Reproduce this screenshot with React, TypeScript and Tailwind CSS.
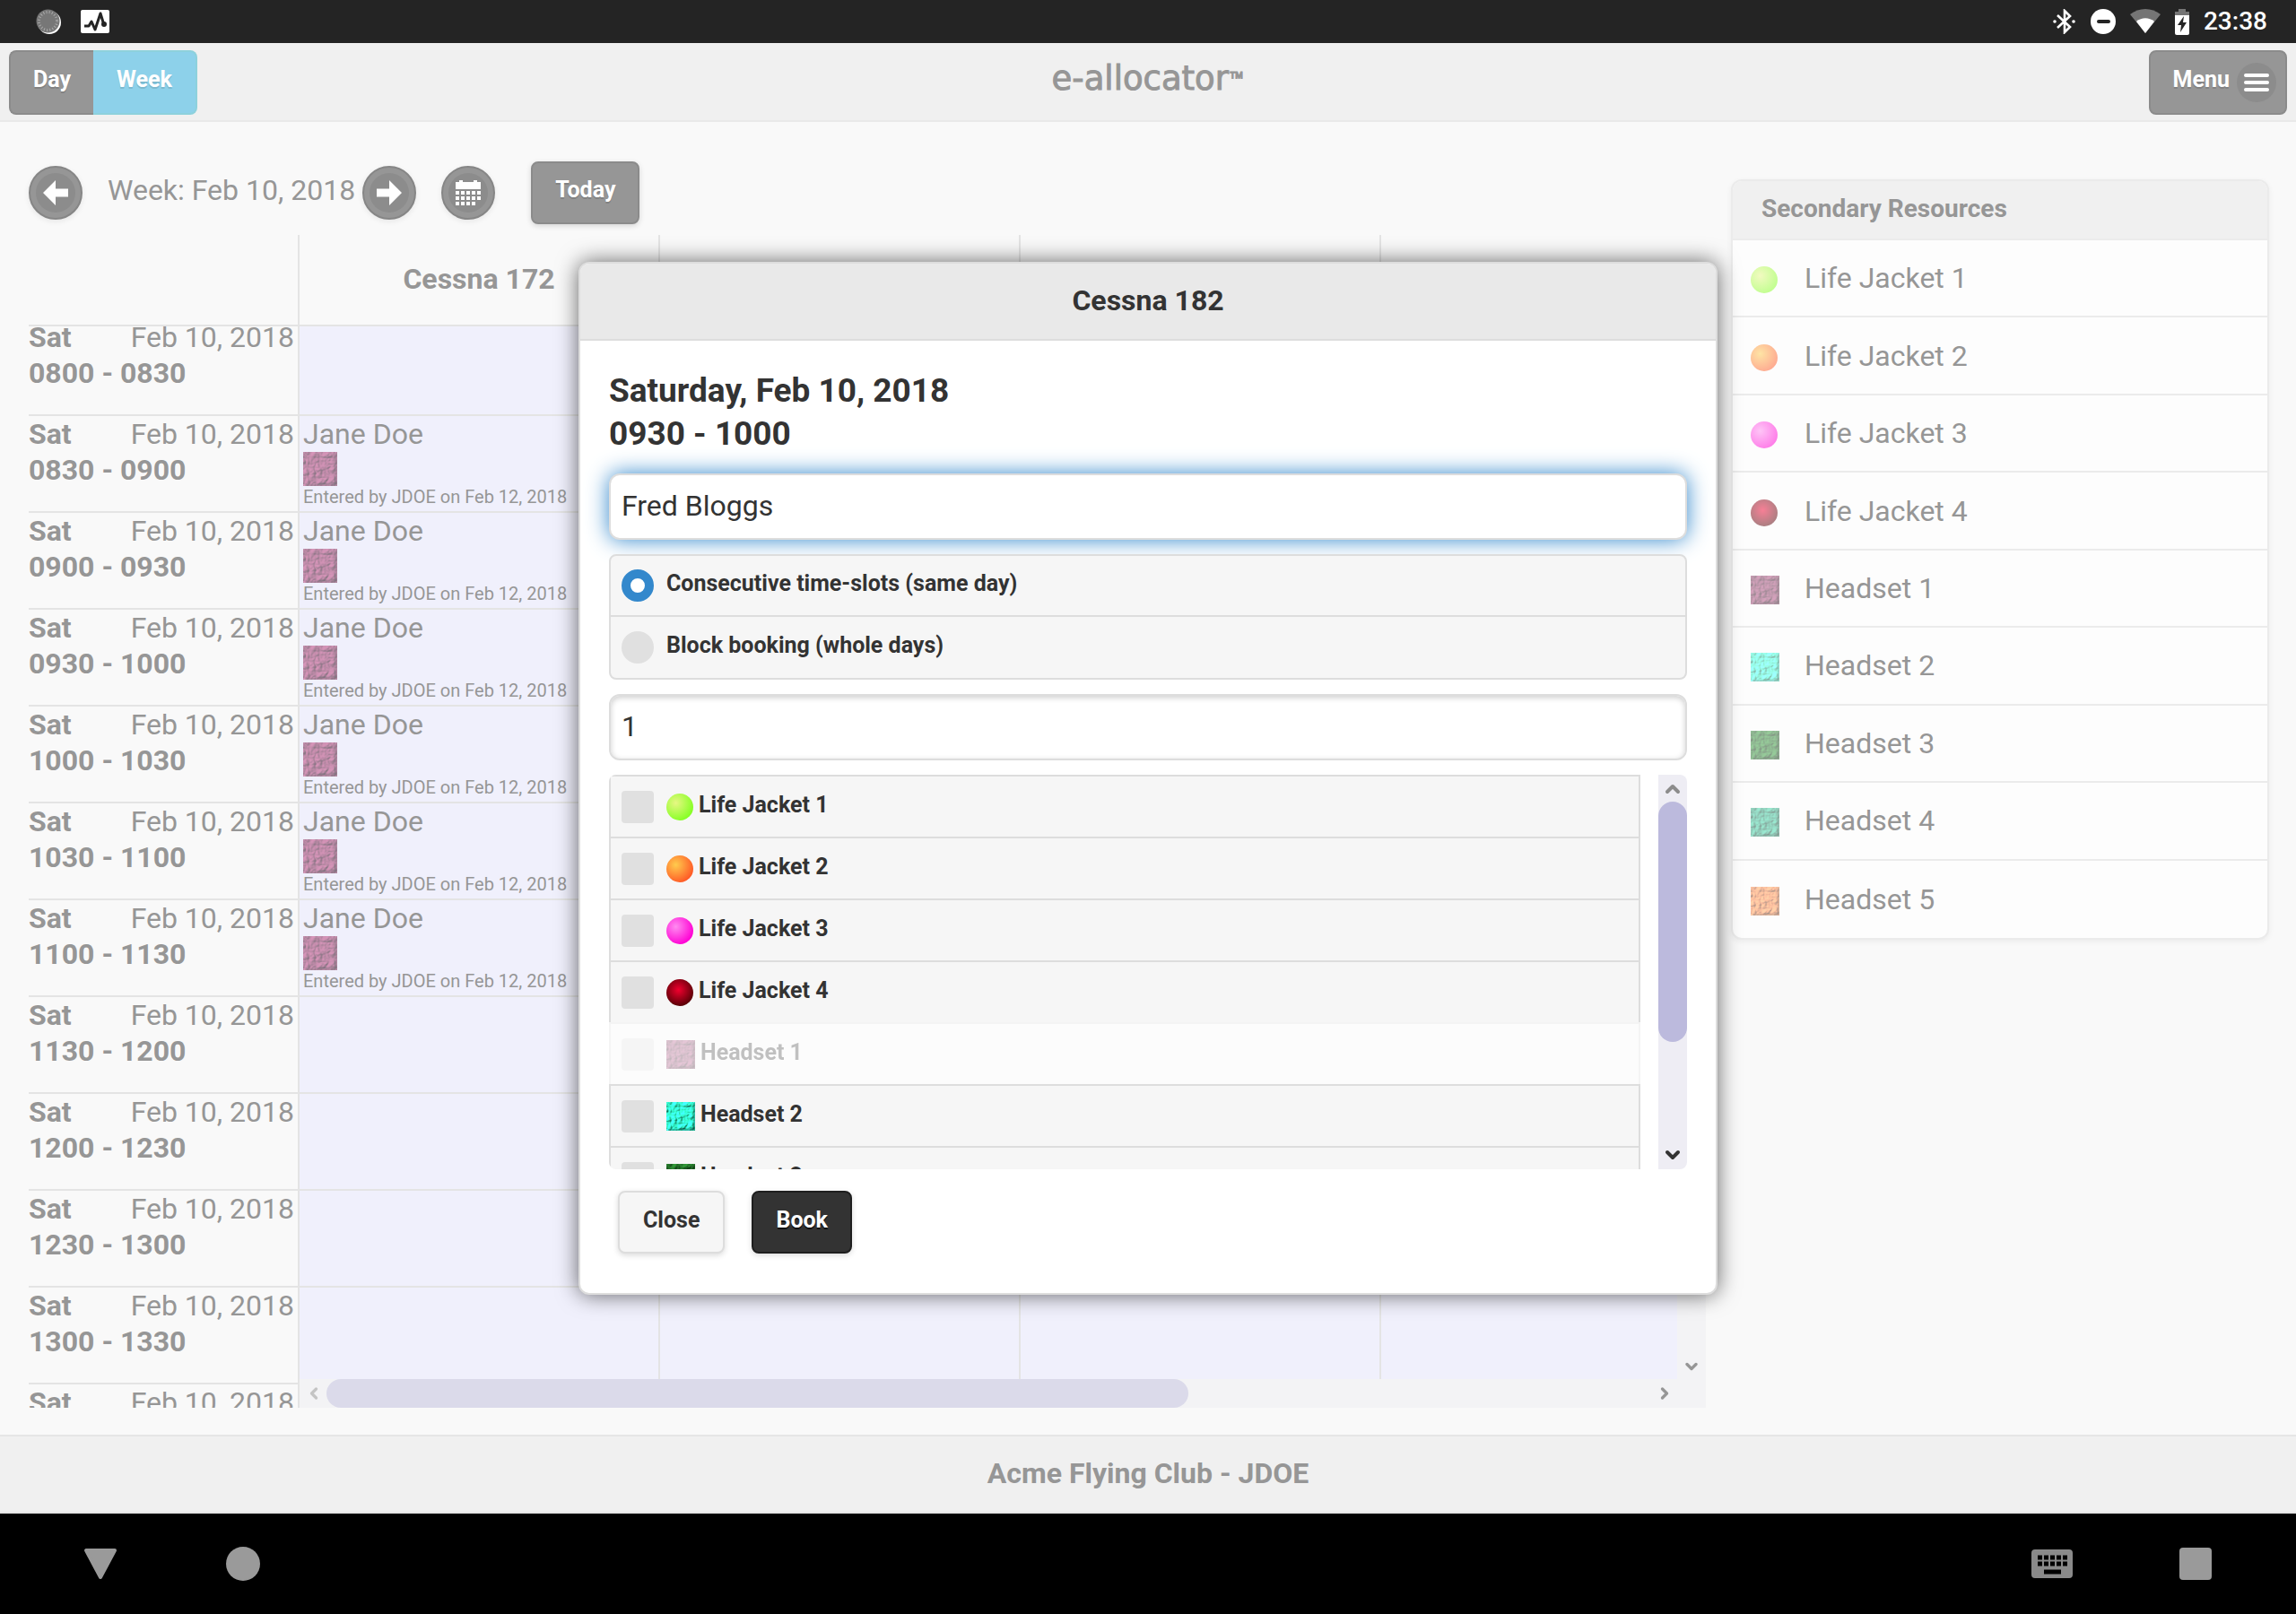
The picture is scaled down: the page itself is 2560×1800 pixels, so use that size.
import { useId } from 'react';
import { clsx } from 'clsx';
import { ChevronDown, ChevronLeft, ChevronRight, ChevronUp } from 'lucide-react';

type Resource = {
  name: string;
  shape: 'ball' | 'tile';
  fill: string;
  booked?: boolean;
};

const resources: Resource[] = [
  { name: 'Life Jacket 1', shape: 'ball', fill: 'bg-[radial-gradient(circle_at_35%_35%,#e6f783,#86ff24_75%)]' },
  { name: 'Life Jacket 2', shape: 'ball', fill: 'bg-[radial-gradient(circle_at_35%_35%,#ffcb4d,#ff5a26_75%)]' },
  { name: 'Life Jacket 3', shape: 'ball', fill: 'bg-[radial-gradient(circle_at_35%_35%,#ff8cf0,#ff00d4_75%)]' },
  { name: 'Life Jacket 4', shape: 'ball', fill: 'bg-[radial-gradient(circle_at_45%_40%,#f0002e,#560006_75%)]' },
  { name: 'Headset 1', shape: 'tile', fill: '#74204c', booked: true },
  { name: 'Headset 2', shape: 'tile', fill: '#1cf5c4' },
  { name: 'Headset 3', shape: 'tile', fill: '#0c6412' },
  { name: 'Headset 4', shape: 'tile', fill: '#14986f' },
  { name: 'Headset 5', shape: 'tile', fill: '#f2702c' },
];

const slots = [
  { time: '0800 - 0830' },
  { time: '0830 - 0900', bookedBy: 'Jane Doe' },
  { time: '0900 - 0930', bookedBy: 'Jane Doe' },
  { time: '0930 - 1000', bookedBy: 'Jane Doe' },
  { time: '1000 - 1030', bookedBy: 'Jane Doe' },
  { time: '1030 - 1100', bookedBy: 'Jane Doe' },
  { time: '1100 - 1130', bookedBy: 'Jane Doe' },
  { time: '1130 - 1200' },
  { time: '1200 - 1230' },
  { time: '1230 - 1300' },
  { time: '1300 - 1330' },
  { time: '' },
];

function Tile({ color, className }: { color: string; className?: string }) {
  const id = useId();
  return (
    <svg viewBox="0 0 32 32" className={clsx('shrink-0', className)} aria-hidden="true">
      <filter id={id} x="0" y="0" width="100%" height="100%" colorInterpolationFilters="sRGB">
        <feTurbulence type="turbulence" baseFrequency="0.16" numOctaves="2" seed="7" result="noise" />
        <feDiffuseLighting in="noise" surfaceScale="2" lightingColor="#fff" result="light">
          <feDistantLight azimuth="225" elevation="50" />
        </feDiffuseLighting>
        <feComposite in="light" in2="SourceGraphic" operator="arithmetic" k1="1" k2="0.14" k3="0.2" />
      </filter>
      <rect width="32" height="32" rx="1" fill={color} filter={`url(#${id})`} />
      <path d="M31 1v30H2" fill="none" stroke="#000" strokeOpacity="0.25" strokeWidth="2" />
    </svg>
  );
}

function ResourceIcon({ resource }: { resource: Resource }) {
  if (resource.shape === 'ball') {
    return <span className={clsx('w-[30px] h-[30px] rounded-full shrink-0', resource.fill)} />;
  }
  return <Tile color={resource.fill} className="w-8 h-8" />;
}

function StatusBar() {
  return (
    <div className="h-12 bg-[#242424] text-white flex items-center justify-between pl-10 pr-8 shrink-0">
      <div className="flex items-center gap-[22px]">
        <svg viewBox="0 0 28 28" className="w-7 h-7">
          <circle cx="15" cy="15" r="13" fill="#fff" />
          <circle cx="13.5" cy="13.5" r="13" fill="#777" />
          <circle cx="13.5" cy="13.5" r="10" fill="none" stroke="#aaa" strokeWidth="3" strokeDasharray="1 2.2" />
        </svg>
        <svg viewBox="0 0 32 26" className="w-8 h-[26px]">
          <rect width="32" height="26" rx="2" fill="#fff" />
          <path d="M4 18h5l3-5 4 9 6-18 4 13" fill="none" stroke="#242424" strokeWidth="3" strokeLinejoin="round" />
          <circle cx="26" cy="16" r="3" fill="#242424" />
        </svg>
      </div>
      <div className="flex items-center gap-4">
        <svg viewBox="0 0 26 28" className="w-[26px] h-7" fill="none" stroke="#fff" strokeWidth="2.6">
          <path d="M5 7l14 13-6 6V2l6 6L5 21" />
          <circle cx="2" cy="14" r="1.8" fill="#fff" stroke="none" />
          <circle cx="23" cy="14" r="1.8" fill="#fff" stroke="none" />
        </svg>
        <svg viewBox="0 0 28 28" className="w-7 h-7">
          <circle cx="14" cy="14" r="14" fill="#fff" />
          <rect x="7" y="12" width="15" height="4" rx="2" fill="#242424" />
        </svg>
        <svg viewBox="0 0 34 28" className="w-[34px] h-7">
          <path d="M0 6C10-2 24-2 34 6L17 27z" fill="#757575" />
          <path d="M7 14c6-5 14-5 20 0L17 27z" fill="#fff" />
        </svg>
        <svg viewBox="0 0 16 29" className="w-4 h-[29px]">
          <path d="M4 0h8v3h4v5H0V3h4z" fill="#757575" />
          <path d="M0 7h16v20q0 2-2 2H2q-2 0-2-2z" fill="#fff" />
          <path d="M10 8L3 18h4l-1 8 7-11H9z" fill="#242424" />
        </svg>
        <span className="text-[28px] leading-8 font-medium">23:38</span>
      </div>
    </div>
  );
}

function Header() {
  return (
    <header className="h-[88px] bg-[#f0f0f0] border-b-2 border-[#e9e9e9] flex items-start justify-between px-[10px] pt-2 shrink-0">
      <div className="flex-1 flex">
        <button className="h-[72px] px-[25px] pb-[6px] rounded-l-lg bg-[#969696] border-2 border-r-0 border-[#8b8b8b] text-white text-[25px] font-bold text-shadow-[0_2px_0_#828282]">
          Day
        </button>
        <button className="h-[72px] px-[26px] pb-[6px] rounded-r-lg bg-[#8dd1ea] border-2 border-l-0 border-[#8dd1dc] text-white text-[25px] font-bold text-shadow-[0_2px_0_#7bb9cf]">
          Week
        </button>
      </div>
      <h1 className="font-['DejaVu_Sans',sans-serif] text-[37px] leading-[64px] text-[#969696] [-webkit-text-stroke:1px_#969696]">
        e-allocator<span className="font-['Roboto',sans-serif] text-[28px]">™</span>
      </h1>
      <div className="flex-1 flex justify-end">
        <button className="h-[72px] pl-[25px] pr-[10px] rounded-lg bg-[#969696] border-2 border-[#8b8b8b] text-white text-[25px] font-bold flex items-center gap-2 text-shadow-[0_2px_0_#828282]">
          <span className="pb-[6px]">Menu</span>
          <span className="w-11 h-11 rounded-full bg-[#8c8c8c] flex flex-col items-center justify-center gap-1">
            <span className="w-7 h-1 rounded-sm bg-white" />
            <span className="w-7 h-1 rounded-sm bg-white" />
            <span className="w-7 h-1 rounded-sm bg-white" />
          </span>
        </button>
      </div>
    </header>
  );
}

function RoundButton({ label, className, children }: { label: string; className?: string; children: React.ReactNode }) {
  return (
    <button
      aria-label={label}
      className={clsx(
        'w-[60px] h-[60px] rounded-full bg-[#969696] border-2 border-[#868686] flex items-center justify-center shrink-0 shadow-[0_2px_6px_rgba(0,0,0,0.08)]',
        className
      )}
    >
      <span className="w-11 h-11 rounded-full bg-[#8c8c8c] flex items-center justify-center">
        <svg viewBox="0 0 28 28" className="w-7 h-7" fill="#fff">
          {children}
        </svg>
      </span>
    </button>
  );
}

function WeekNav() {
  return (
    <div className="flex items-center h-[70px] text-[#969696]">
      <RoundButton label="Previous week">
        <path d="M14 0v9.5h14v9H14V28L0 14z" />
      </RoundButton>
      <span className="ml-7 pb-[6px] text-[32px] leading-10 whitespace-nowrap">Week: Feb 10, 2018</span>
      <RoundButton label="Next week" className="ml-2">
        <path d="M14 0v9.5H0v9h14V28l14-14z" />
      </RoundButton>
      <RoundButton label="Pick a date" className="ml-7">
        <path d="M0 2h4V0h4v2h12V0h4v2h4v8H0z" />
        <path d="M0 12h4v4H0zM6 12h4v4H6zM12 12h4v4h-4zM18 12h4v4h-4zM24 12h4v4h-4zM0 18h4v4H0zM6 18h4v4H6zM12 18h4v4h-4zM18 18h4v4h-4zM24 18h4v4h-4zM0 24h4v4H0zM6 24h4v4H6zM12 24h4v4h-4zM18 24h4v4h-4z" />
      </RoundButton>
      <button className="ml-10 h-[70px] px-[25px] pb-[6px] rounded-lg bg-[#969696] border-2 border-[#8b8b8b] text-white text-[25px] font-bold text-shadow-[0_2px_0_#828282] shadow-[0_2px_6px_rgba(0,0,0,0.15)]">
        Today
      </button>
    </div>
  );
}

function Schedule() {
  return (
    <div className="mt-3 flex-1 min-h-0 flex text-[32px] leading-10 text-[#969696]">
      {/* Time column */}
      <div className="w-[300px] shrink-0 flex flex-col">
        <div className="h-[102px] shrink-0 border-b-2 border-[#e4e4e4]" />
        <div className="flex-1 min-h-0 overflow-hidden">
          <table className="w-full -mt-2 border-separate border-spacing-0">
            <tbody>
              {slots.map((slot) => (
                <tr key={slot.time}>
                  <th scope="row" className="h-[108px] p-0 pr-1 border-b-2 border-[#e4e4e4] text-left align-top">
                    <div className="flex justify-between">
                      <span>Sat</span>
                      <span className="font-normal">Feb 10, 2018</span>
                    </div>
                    {slot.time}
                  </th>
                </tr>
              ))}
            </tbody>
          </table>
        </div>
      </div>

      {/* Aircraft columns */}
      <div className="flex-1 min-w-0 flex flex-col border-l-2 border-[#e4e4e4]">
        <div className="h-[102px] shrink-0 border-b-2 border-[#e4e4e4] flex overflow-hidden">
          <div className="w-[400px] shrink-0 flex items-center justify-center pb-[2px] font-bold">Cessna 172</div>
          <div className="w-[402px] shrink-0 border-l-2 border-[#e4e4e4]" />
          <div className="w-[402px] shrink-0 border-l-2 border-[#e4e4e4]" />
          <div className="w-[402px] shrink-0 border-l-2 border-[#e4e4e4]" />
        </div>
        <div className="flex-1 min-h-0 flex">
          <div className="flex-1 min-w-0 overflow-hidden bg-[#f0f0fc]">
            <table className="w-[1606px] -mt-2 table-fixed border-separate border-spacing-0">
              <tbody>
                {slots.map((slot) => (
                  <tr key={slot.time}>
                    <td className="w-[400px] h-[108px] p-0 pl-1 border-b-2 border-[#e4e4e4] align-top">
                      {slot.bookedBy && (
                        <>
                          <div>{slot.bookedBy}</div>
                          <Tile color="#84204f" className="w-[38px] h-[38px] block opacity-55" />
                          <div className="text-[20px] leading-6">Entered by JDOE on Feb 12, 2018</div>
                        </>
                      )}
                    </td>
                    <td className="p-0 border-b-2 border-l-2 border-[#e4e4e4]" />
                    <td className="p-0 border-b-2 border-l-2 border-[#e4e4e4]" />
                    <td className="p-0 border-b-2 border-l-2 border-[#e4e4e4]" />
                  </tr>
                ))}
              </tbody>
            </table>
          </div>
          <div className="w-8 shrink-0 pb-1 bg-[#f3f3f5] flex flex-col items-center justify-between">
            <ChevronUp className="w-5 h-5 text-[#bbb]" strokeWidth={3} />
            <ChevronDown className="w-5 h-5" strokeWidth={4} />
          </div>
        </div>
        <div className="h-8 shrink-0 bg-[#f3f3f5] flex items-center pl-[6px] pr-9">
          <ChevronLeft className="w-5 h-5 text-[#c4c4c4]" strokeWidth={4} />
          <div className="flex-1 h-8 px-1">
            <div className="w-[65%] h-8 rounded-full bg-[#dbdaea]" />
          </div>
          <ChevronRight className="w-5 h-5" strokeWidth={4} />
        </div>
      </div>
    </div>
  );
}

function SecondaryResources() {
  return (
    <aside className="mt-16 w-[600px] shrink-0 self-start rounded-xl border-2 border-[#ebebeb] overflow-hidden bg-[#fdfdfd] text-[#969696] shadow-[0_2px_6px_rgba(0,0,0,0.06)]">
      <h2 className="h-[66px] px-8 pb-[2px] flex items-center bg-[#f0f0f0] border-b-2 border-[#ebebeb] text-[28px] font-bold">
        Secondary Resources
      </h2>
      <ul className="grid auto-rows-fr min-h-[778px] divide-y-2 divide-[#ebebeb]">
        {resources.map((resource) => (
          <li key={resource.name} className="flex items-center px-5 pt-1 text-[32px] leading-10">
            <span className="w-[60px] flex opacity-50">
              <ResourceIcon resource={resource} />
            </span>
            <span className="pb-1">{resource.name}</span>
          </li>
        ))}
      </ul>
    </aside>
  );
}

function BookingDialog() {
  return (
    <div
      role="dialog"
      aria-labelledby="booking-title"
      className="w-full max-w-[1270px] rounded-xl border-2 border-[#ddd] bg-white text-[#333] overflow-hidden shadow-[0_0_24px_rgba(0,0,0,0.6)]"
    >
      <h2
        id="booking-title"
        className="h-[86px] pb-[2px] flex items-center justify-center bg-[#e9e9e9] border-b-2 border-[#ddd] text-[32px] font-bold"
      >
        Cessna 182
      </h2>

      <form className="px-8 pt-8 pb-11" onSubmit={(e) => e.preventDefault()}>
        <h3 className="text-[37px] leading-[48px] font-bold">
          Saturday, Feb 10, 2018
          <br />
          0930 - 1000
        </h3>

        <input
          type="text"
          aria-label="Name"
          defaultValue="Fred Bloggs"
          className="mt-5 block w-full h-[74px] px-3 pb-[2px] rounded-xl border-2 border-[#ddd] bg-white text-[32px] outline-none shadow-[0_0_24px_#3388cc]"
        />

        <div className="mt-4 rounded-lg border-2 border-[#ddd] bg-[#f6f6f6] divide-y-2 divide-[#ddd] text-[25px] font-bold">
          <label className="h-[68px] px-3 flex items-center gap-[14px]">
            <input
              type="radio"
              name="mode"
              defaultChecked
              className="appearance-none w-9 h-9 rounded-full bg-[#e0e0e0] checked:bg-white checked:border-10 checked:border-[#3388cc]"
            />
            <span className="pb-1">Consecutive time-slots (same day)</span>
          </label>
          <label className="h-[68px] px-3 flex items-center gap-[14px]">
            <input
              type="radio"
              name="mode"
              className="appearance-none w-9 h-9 rounded-full bg-[#e0e0e0] checked:bg-white checked:border-10 checked:border-[#3388cc]"
            />
            <span className="pb-1">Block booking (whole days)</span>
          </label>
        </div>

        <input
          type="text"
          aria-label="Number of slots"
          defaultValue="1"
          className="mt-4 block w-full h-[74px] px-3 pb-[2px] rounded-xl border-2 border-[#ddd] bg-white text-[32px] outline-none shadow-[inset_0_2px_6px_rgba(0,0,0,0.2)]"
        />

        <div className="mt-4 h-[440px] flex justify-between gap-5">
          <div className="flex-1 overflow-y-auto [scrollbar-width:none] rounded-l-lg text-[25px] font-bold">
            {resources.map((resource) => (
              <label
                key={resource.name}
                className={clsx(
                  'h-[69px] px-3 flex items-center border-2 border-b-0 border-[#ddd] bg-[#f6f6f6]',
                  resource.booked && 'opacity-30'
                )}
              >
                <input
                  type="checkbox"
                  disabled={resource.booked}
                  className="appearance-none w-9 h-9 mr-[14px] rounded bg-[#e0e0e0] checked:bg-[#3388cc]"
                />
                <ResourceIcon resource={resource} />
                <span className="ml-[6px] pb-1">{resource.name}</span>
              </label>
            ))}
          </div>
          <div className="w-8 rounded-r-lg bg-[#eeedf4] flex flex-col items-center py-1">
            <ChevronUp className="w-6 h-6 text-[#8c8c8c]" strokeWidth={4} />
            <div className="mt-[2px] w-8 h-[268px] rounded-full bg-[#bcbadd]" />
            <ChevronDown className="mt-auto w-6 h-6" strokeWidth={4} />
          </div>
        </div>

        <div className="mt-6 ml-[10px] flex gap-[30px] text-[25px] font-bold">
          <button className="h-[70px] px-[26px] pb-1 rounded-lg border-2 border-[#ddd] bg-[#f6f6f6] shadow-[0_2px_6px_rgba(0,0,0,0.15)]">
            Close
          </button>
          <button className="h-[70px] px-[25px] pb-1 rounded-lg border-2 border-[#1f1f1f] bg-[#333] text-white text-shadow-[0_2px_0_#111] shadow-[0_2px_6px_rgba(0,0,0,0.15)]">
            Book
          </button>
        </div>
      </form>
    </div>
  );
}

function SystemNav() {
  return (
    <nav className="h-28 bg-black flex items-center justify-between pl-[92px] pr-[94px] shrink-0">
      <div className="flex items-center gap-[120px]">
        <button aria-label="Back">
          <svg viewBox="0 0 40 36" className="w-10 h-9">
            <path d="M4 3h32L20 33z" fill="#9a9a9a" stroke="#9a9a9a" strokeWidth="4" strokeLinejoin="round" />
          </svg>
        </button>
        <button aria-label="Home" className="w-[38px] h-[38px] rounded-full bg-[#9a9a9a]" />
      </div>
      <div className="flex items-center gap-[119px]">
        <button aria-label="Keyboard">
          <svg viewBox="0 0 46 32" className="w-[46px] h-8">
            <rect width="46" height="32" rx="4" fill="#8a8a8a" />
            <path
              d="M7 9h33M7 16h33"
              stroke="#000"
              strokeWidth="5"
              strokeDasharray="5 2"
            />
            <path d="M14 25h19" stroke="#000" strokeWidth="5" />
          </svg>
        </button>
        <button aria-label="Recent apps" className="w-9 h-9 rounded-sm bg-[#9a9a9a]" />
      </div>
    </nav>
  );
}

export default function App() {
  return (
    <div className="h-screen flex flex-col bg-[#f9f9f9] font-['Roboto','Liberation_Sans',sans-serif]">
      <StatusBar />
      <div className="relative flex-1 min-h-0 flex flex-col">
        <Header />
        <main className="flex-1 min-h-0 flex gap-7 pl-8 pr-[30px]">
          <section className="flex-1 min-w-0 flex flex-col pt-11 pb-[30px]">
            <WeekNav />
            <Schedule />
          </section>
          <SecondaryResources />
        </main>
        <footer className="h-[88px] pb-[2px] shrink-0 bg-[#f0f0f0] border-y-2 border-[#e6e6e6] flex items-center justify-center text-[32px] font-bold text-[#969696]">
          Acme Flying Club - JDOE
        </footer>

        <div className="absolute inset-0 flex items-center justify-center">
          <BookingDialog />
        </div>
      </div>
      <SystemNav />
    </div>
  );
}
